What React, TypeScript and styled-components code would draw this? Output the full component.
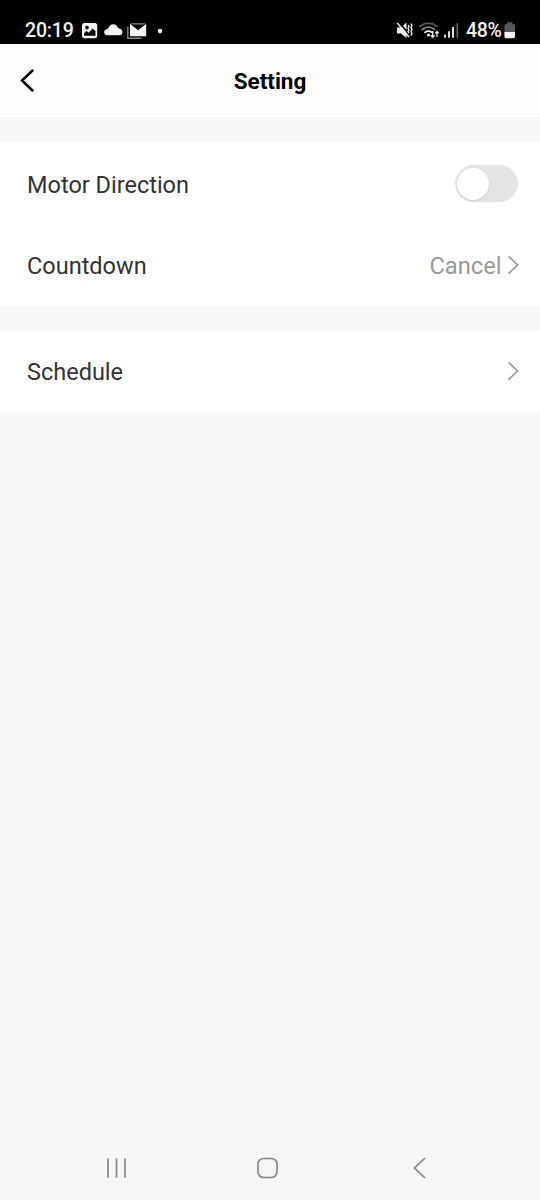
import React from 'react';
import styled, { createGlobalStyle } from 'styled-components';

const GlobalStyle = createGlobalStyle`
  * { box-sizing: border-box; }
  body { margin: 0; background: #f8f8f8; font-family: Roboto, sans-serif; }
  svg { display: block; flex: none; }
`;

const Screen = styled.div`
  display: flex;
  flex-direction: column;
  width: 540px;
  height: 1200px;
  background: #f8f8f8;
`;

const StatusBar = styled.header`
  display: flex;
  align-items: center;
  justify-content: space-between;
  height: 44px;
  padding: 17px 24px 0 25px;
  background: #000;
  color: #f2f2f2;
`;

const StatusGroup = styled.div`
  display: flex;
  align-items: center;
`;

const StatusText = styled.span`
  font-size: 19.5px;
  line-height: 26px;
  font-weight: 500;
  white-space: nowrap;
`;

const Clock = styled(StatusText)`
  width: 56px;
  letter-spacing: -0.15px;
`;

const Battery = styled(StatusText)`
  width: 39px;
  padding-left: 1px;
  letter-spacing: -0.3px;
`;

const TitleBar = styled.div`
  display: grid;
  grid-template-columns: 60px 1fr 60px;
  align-items: center;
  height: 73px;
  padding-bottom: 1px;
  background: #fefcfd;
`;

const BackButton = styled.button`
  display: flex;
  padding: 0 0 0 18px;
  border: 0;
  background: none;
  color: #000;
`;

const Title = styled.h1`
  margin: 1px 0 0;
  text-align: center;
  color: #000;
  font-size: 22.5px;
  line-height: 28px;
  font-weight: 700;
`;

const Content = styled.main`
  display: flex;
  flex: 1;
  flex-direction: column;
  gap: 26px;
  padding-top: 26px;
`;

const Group = styled.section`
  background: #fff;
`;

const Row = styled.div<{ $lift?: number }>`
  display: flex;
  align-items: center;
  justify-content: space-between;
  height: 81px;
  padding: 0 21px ${({ $lift = 0 }) => $lift}px 27px;
`;

const Label = styled.span`
  padding-top: 2px;
  color: #333;
  font-size: 23.5px;
  line-height: 30px;
`;

const Trailing = styled.div`
  display: flex;
  align-items: center;
  gap: 5.5px;
  color: #999;
`;

const Value = styled(Label)`
  color: #999;
  font-size: 23.7px;
`;

const Toggle = styled.button`
  display: flex;
  align-items: center;
  width: 63px;
  height: 37px;
  margin-right: 1px;
  padding: 0 2px;
  border: 0;
  border-radius: 19px;
  background: #e5e5e5;
`;

const Knob = styled.span`
  width: 32px;
  height: 32px;
  border-radius: 50%;
  background: #fff;
  box-shadow: 0 1px 2px rgba(0, 0, 0, 0.12);
`;

const NavigationBar = styled.nav`
  display: grid;
  grid-template-columns: 1fr 1fr 1fr;
  align-items: center;
  width: 453px;
  height: 62px;
  margin: 0 auto;
  padding-bottom: 2px;
`;

const NavigationArea = styled.footer`
  padding-right: 5px;
  background: #f6f6f6;
`;

const NavButton = styled.button`
  display: flex;
  justify-content: center;
  padding: 0;
  border: 0;
  background: none;
  color: #858585;
`;

const NotificationIcons = () => (
  <svg width="84" height="20" viewBox="81 21 84 20" fill="#f2f2f2">
    <path fillRule="evenodd" d="M84.500 23h10.200a2.500 2.500 0 0 1 2.500 2.500v10.200a2.500 2.500 0 0 1-2.500 2.500H84.500a2.500 2.500 0 0 1-2.500-2.500V25.500a2.500 2.500 0 0 1 2.500-2.500ZM84 33.300v2.400h11.500v-4.700l-3-2.600-3.800 4.300-2.200-1.700ZM87 25.700a1.800 1.800 0 1 0 .01 0Z" />
    <path d="M107.300 35.300a3.100 3.100 0 0 1-.8-6.100c1.200-.2 1.700-.5 2.300-1.900.9-2 2.500-3 4.300-3 2.500 0 4.400 1.600 5.100 4 2.700.2 4.300 1.600 4.300 3.700 0 2-1.400 3.300-3.300 3.300Z" />
    <path d="M127.800 26.500v11.800H141.500" fill="none" stroke="#888" strokeWidth="1.400" />
    <path d="M130 23.700l8.100 6.500 8.100-6.500v12.500H130Z" />
    <path d="M130.500 23.200h15.200l-1.700 1.400h-11.800Z" fill="#888" />
    <circle cx="160" cy="31" r="2.200" />
  </svg>
);

const ConnectivityIcons = () => (
  <svg width="68" height="20" viewBox="397 21 68 20" fill="none" stroke="#f2f2f2">
    <path d="M397 27.500h4l5.500-5v15.500l-5.500-4.500H397Z" fill="#f2f2f2" stroke="none" />
    <path d="M398.300 21.500l12 14" stroke="#000" strokeWidth="1.700" />
    <path d="M397.300 23l11.700 14" strokeWidth="1.500" />
    <path d="M408 25l1 1.500-1 1.700 1 1.600-1 1.700 1 1.500M411 23.500l1 2-1 2 1 2-1 2 1 2-1 2.200" strokeWidth="1.300" />
    <g strokeWidth="1.700" strokeLinecap="round">
      <path d="M419.700 26.500q8.800-6.600 17.600 0" stroke="#555" />
      <path d="M422.300 29.500q6.200-4.800 12.400 0" stroke="#888" />
      <path d="M425 32.400q3.500-2.600 7 0" />
    </g>
    <circle cx="428.500" cy="35" r="1.500" fill="#f2f2f2" stroke="none" />
    <path d="M432.700 31v6M430.800 35.200l1.900 2 1.900-2M437 37v-5.500M435.200 33.400l1.800-2 1.800 2" strokeWidth="1.300" />
    <path d="M445 37.800v-3M449 37.800v-6.500M453 37.800V27" strokeWidth="1.800" />
    <path d="M457.300 37.800V23.200" stroke="#666" strokeWidth="1.600" />
  </svg>
);

const BatteryIcon = () => (
  <svg width="12" height="20" viewBox="504 21 12 20">
    <path d="M507 24v-1.700h5.500V24h.7a1.800 1.800 0 0 1 1.800 1.800V32h-10.600v-6.200a1.800 1.800 0 0 1 1.800-1.800Z" fill="#575757" />
    <path d="M504.400 32H515v4.500a1.700 1.700 0 0 1-1.700 1.700h-7.200a1.700 1.700 0 0 1-1.700-1.700Z" fill="#f2f2f2" />
  </svg>
);

const Chevron = () => (
  <svg width="12" height="20" viewBox="0 0 12 20" fill="none" stroke="#999" strokeWidth="1.700">
    <path d="M1.500 1.300 10.500 10 1.500 18.700" />
  </svg>
);

export default function App() {
  return (
    <>
      <GlobalStyle />
      <Screen>
        <StatusBar>
          <StatusGroup>
            <Clock>20:19</Clock>
            <NotificationIcons />
          </StatusGroup>
          <StatusGroup>
            <ConnectivityIcons />
            <Battery>48%</Battery>
            <BatteryIcon />
          </StatusGroup>
        </StatusBar>
        <TitleBar>
          <BackButton aria-label="Back">
            <svg width="18" height="26" viewBox="0 0 18 26" fill="none" stroke="currentColor" strokeWidth="2.500" strokeLinecap="round">
              <path d="M14.500 3.500 4 13.500 14.500 23.500" />
            </svg>
          </BackButton>
          <Title>Setting</Title>
        </TitleBar>
        <Content>
          <Group>
            <Row>
              <Label>Motor Direction</Label>
              <Toggle role="switch" aria-checked={false} aria-label="Motor Direction">
                <Knob />
              </Toggle>
            </Row>
            <Row>
              <Label>Countdown</Label>
              <Trailing>
                <Value>Cancel</Value>
                <Chevron />
              </Trailing>
            </Row>
          </Group>
          <Group>
            <Row $lift={1}>
              <Label>Schedule</Label>
              <Chevron />
            </Row>
          </Group>
        </Content>
        <NavigationArea>
          <NavigationBar>
            <NavButton aria-label="Recent apps">
              <svg width="22" height="22" viewBox="0 0 22 22" fill="none" stroke="currentColor" strokeWidth="1.700" strokeLinecap="round">
                <path d="M2 2v18M10.500 2v18M19 2v18" />
              </svg>
            </NavButton>
            <NavButton aria-label="Home">
              <svg width="22" height="22" viewBox="0 0 22 22" fill="none" stroke="currentColor" strokeWidth="1.600">
                <rect x="1" y="1.500" width="19" height="19" rx="5.500" />
              </svg>
            </NavButton>
            <NavButton aria-label="Back">
              <svg width="22" height="22" viewBox="0 0 22 22" fill="none" stroke="currentColor" strokeWidth="1.700" strokeLinecap="round">
                <path d="M16.500 1.500 6.500 11l10 9.500" />
              </svg>
            </NavButton>
          </NavigationBar>
        </NavigationArea>
      </Screen>
    </>
  );
}
